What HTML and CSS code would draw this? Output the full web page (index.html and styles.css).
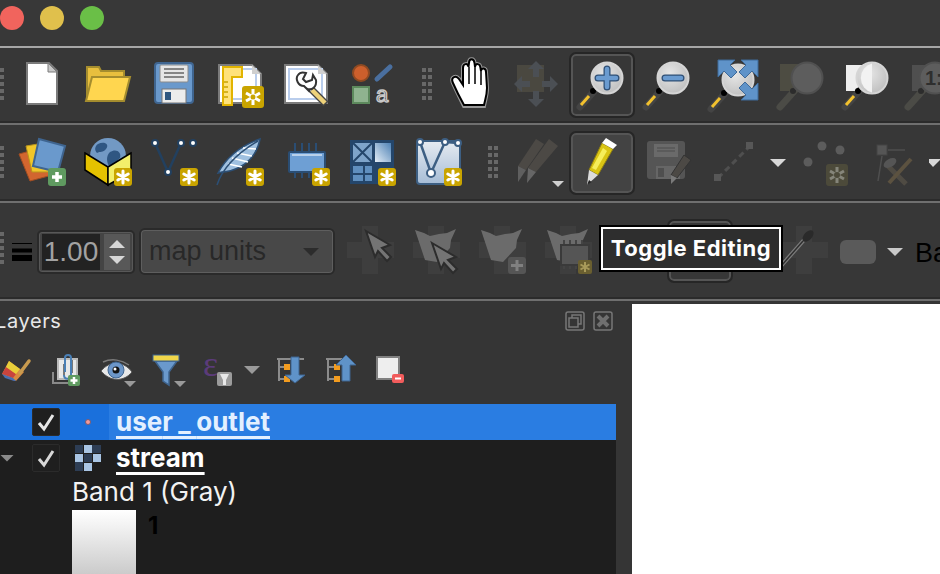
FILE: index.html
```html
<!DOCTYPE html>
<html lang="en">
<head>
<meta charset="utf-8">
<title>QGIS</title>
<link rel="stylesheet" href="styles.css">
</head>
<body>
<svg class="sprite" aria-hidden="true">
  <defs>
    <radialGradient id="lens" cx="0.4" cy="0.35" r="0.8"><stop offset="0" stop-color="#e6e6e6"/><stop offset="1" stop-color="#b9b9b9"/></radialGradient>
    <linearGradient id="nodebg" x1="0" y1="0" x2="0" y2="1"><stop offset="0" stop-color="#e6ebf1"/><stop offset="1" stop-color="#a6bdd6"/></linearGradient>
    <linearGradient id="tri" x1="0" y1="1" x2="1" y2="0"><stop offset="0" stop-color="#e3edf6"/><stop offset="1" stop-color="#4f82b5"/></linearGradient>
    <symbol id="badge" viewBox="0 0 18 18" overflow="visible">
      <rect width="18" height="18" rx="3" fill="#c9a400"/>
      <path d="M9 3v12M3.800 6l10.400 6M3.800 12l10.400-6" stroke="#fff" stroke-width="3" stroke-linecap="round"/>
    </symbol>
    <symbol id="mag" viewBox="0 0 60 60" overflow="visible">
      <path d="M26 28L9 47" stroke="#444" stroke-width="7" stroke-linecap="round"/>
      <path d="M18 36L10 45" stroke="#f2c12e" stroke-width="3"/>
      <circle cx="22" cy="31" r="3" fill="#000"/>
      <circle cx="36" cy="18" r="15.500" fill="url(#lens)" stroke="#d5d5d5" stroke-width="2"/>
    </symbol>
    <symbol id="magoff" viewBox="0 0 60 60" overflow="visible">
      <path d="M26 28L9 47" stroke="#4b4b46" stroke-width="7" stroke-linecap="round"/>
      <circle cx="22" cy="31" r="3" fill="#2c2c2c"/>
      <circle cx="36" cy="18" r="15.500" fill="#5d5d5d" stroke="#505050" stroke-width="2"/>
    </symbol>
    <symbol id="chk" viewBox="0 0 48 48" overflow="visible">
      <path d="M16 0h16v16h16v16H32v16H16V32H0V16h16z" fill="#3e3e3e"/>
    </symbol>
  </defs>
</svg>

<div class="window">
  <header class="titlebar">
    <span class="light red"></span>
    <span class="light yellow"></span>
    <span class="light green"></span>
  </header>

  <div class="toolbar row-one">
    <span class="grip edge"></span>
    <svg class="slot tall" viewBox="9 47 66 76"><path d="M27 63H49L57 71V104H27Z" fill="#fff" stroke="#7b7b7b" stroke-width="2"/><path d="M48 63V72H57Z" fill="#c8c8c8" stroke="#7b7b7b"/></svg>
    <svg class="slot tall" viewBox="75 47 66 76"><path d="M87 101V67H99L101 71H124V80H92Z" fill="#e8bf3e" stroke="#a58d2e" stroke-width="2"/><path d="M86 101L92 77H130L124 101Z" fill="#ffd64f" stroke="#a58d2e" stroke-width="2"/></svg>
    <svg class="slot tall" viewBox="141 47 66 76"><rect x="155" y="63" width="38" height="40" rx="3" fill="#6a99cc" stroke="#3f6590" stroke-width="2"/><rect x="160" y="65" width="28" height="17" rx="1" fill="#e6e6e6" stroke="#8a8a8a"/><path d="M164 69h20M164 73h20M164 77h20" stroke="#666" stroke-width="1.600"/><rect x="162" y="89" width="24" height="14" fill="#ececec" stroke="#777"/><rect x="165" y="92" width="6" height="8" fill="#2f5680"/></svg>
    <svg class="slot tall" viewBox="207 47 66 76"><path d="M219 65H252L261 74V103H219Z" fill="#fff" stroke="#7b7b7b" stroke-width="2"/><path d="M226 69H256V99H226Z" fill="none" stroke="#b9cdec" stroke-width="2"/><path d="M252 65V74H261Z" fill="#cfcfcf"/><path d="M223 67H242V77H232V105H223Z" fill="#ffe27a" stroke="#e2b400" stroke-width="2"/><path d="M224 82h4M224 87h4M224 92h4M224 97h4" stroke="#c9a400" stroke-width="1.500"/><rect x="242" y="86" width="22" height="22" rx="3" fill="#c9a400"/><path d="M253 89V105M246 93L260 101M246 101L260 93" stroke="#fff" stroke-width="3"/><circle cx="253" cy="97" r="2.500" fill="#c9a400"/></svg>
    <svg class="slot tall" viewBox="273 47 66 76"><path d="M285 65H318L327 74V103H285Z" fill="#fff" stroke="#7b7b7b" stroke-width="2"/><path d="M289 69H322V99H289Z" fill="none" stroke="#b9cdec" stroke-width="2"/><path d="M318 65V74H327Z" fill="#cfcfcf"/><path d="M312 90L326 104" stroke="#444" stroke-width="7"/><path d="M312 90L325 103" stroke="#eed27a" stroke-width="4.500"/><path d="M306 73L303 79L306 82L312 80L313 75L316 80C317 86 312 92 306 88L310 92L304 86C298 86 295 79 298 75C300 72 303 72 306 73Z" fill="#fff" stroke="#333" stroke-width="2"/></svg>
    <svg class="slot tall" viewBox="339 47 66 76"><circle cx="361" cy="73" r="8" fill="#cc5f2c" stroke="#8f4a22" stroke-width="2"/><path d="M377 79L390 67" stroke="#4a6f9f" stroke-width="5" stroke-linecap="round"/><rect x="353" y="87" width="16" height="16" fill="#8fb38f" stroke="#5d8a5d" stroke-width="2"/><text x="376" y="102" class="glyph-a">a</text></svg>
    <span class="grip mid"></span>
    <svg class="slot tall" viewBox="437 47 66 76"><path d="M464 106C460 98 456 90 452.500 82C451 77 456 75 459 79L463 85L463 68C463 63 468 63 468.500 67L469 63C469 58 474 58 474.500 63L475 67C475.500 63 480 63 480.500 68L481 71C481.500 67 486 68 486 72L487 88C487 95 485 100 484 106Z" fill="#fff" stroke="#999" stroke-width="4"/><path d="M464 105C460 98 456 90 452.500 82C451 77 456 75 459 79L463 85L463 68C463 63 468 63 468.500 67L469 63C469 58 474 58 474.500 63L475 67C475.500 63 480 63 480.500 68L481 71C481.500 67 486 68 486 72L487 88C487 95 485 100 484 105Z" fill="#fff" stroke="#000" stroke-width="2"/><path d="M469 67V84M475 67V84M481 71V85" stroke="#000" stroke-width="1.500"/></svg>
    <svg class="slot tall" viewBox="503 47 66 76"><rect x="517" y="65" width="27" height="27" fill="#4a4840"/><path d="M536 61l8 8h-5v8h-6v-8h-5zM536 107l-8-8h5v-8h6v8h5zM514 84l8-8v5h8v6h-8v5zM558 84l-8 8v-5h-8v-6h8v-5z" fill="#4b4f54"/></svg>
    <div class="active">
      <svg class="slot tall inner" viewBox="569 47 66 76"><use href="#mag" x="571" y="60" width="60" height="60"/><path d="M607 69V87M598 78H616" stroke="#2f4f75" stroke-width="7" stroke-linecap="round"/><path d="M607 69V87M598 78H616" stroke="#6a9bd0" stroke-width="4.500" stroke-linecap="round"/></svg>
    </div>
    <svg class="slot tall" viewBox="635 47 66 76"><use href="#mag" x="637" y="60" width="60" height="60"/><path d="M665 78H681" stroke="#2f4f75" stroke-width="7" stroke-linecap="round"/><path d="M665 78H681" stroke="#6a9bd0" stroke-width="4.500" stroke-linecap="round"/></svg>
    <svg class="slot tall" viewBox="701 47 66 76"><use href="#mag" x="702" y="62" width="60" height="60"/><path d="M718 60H735L730 65L737 72L731 78L724 71L718 77ZM758 60H741L746 65L739 72L745 78L752 71L758 77ZM758 100H741L746 95L739 88L745 82L752 89L758 83Z" fill="#5f93c9" stroke="#3f6a99"/></svg>
    <svg class="slot tall" viewBox="767 47 66 76"><rect x="780" y="64" width="24" height="27" fill="#4d4c42"/><use href="#magoff" x="771" y="60" width="60" height="60"/></svg>
    <svg class="slot tall" viewBox="833 47 66 76"><rect x="846" y="65" width="18" height="26" fill="#eee"/><use href="#mag" x="836" y="60" width="60" height="60"/><path d="M872 63.500A15 15 0 0 0 872 92.500Z" fill="#f2f2f2"/></svg>
    <svg class="slot tall" viewBox="899 47 66 76"><rect x="912" y="65" width="24" height="26" fill="#4f4f4f"/><use href="#magoff" x="899" y="60" width="60" height="60"/><text x="925" y="85" class="glyph-one">1:</text></svg>
  </div>

  <div class="toolbar row-two">
    <span class="grip edge"></span>
    <svg class="slot tall" viewBox="9 125 66 76"><path d="M19 154L48 146L56 174L30 181Z" fill="#d2662f" stroke="#a14d22"/><path d="M26 146L50 142L54 172L32 172Z" fill="#f0c62a" stroke="#b9951c"/><path d="M39 139L65 146L58 172L33 166Z" fill="#6a99cc" stroke="#3f6590" stroke-width="2"/><rect x="48" y="168" width="18" height="18" rx="3" fill="#5f9a60"/><path d="M57 172V182M52 177H62" stroke="#fff" stroke-width="3.500"/></svg>
    <svg class="slot tall" viewBox="75 125 66 76"><circle cx="108" cy="156" r="18" fill="#7299c4"/><path d="M98 144C104 141 110 144 106 149C103 153 100 151 97 153C94 150 95 146 98 144ZM110 152C116 148 122 152 120 158C116 162 112 164 110 168C106 162 106 156 110 152Z" fill="#2f5682"/><path d="M85 153L108 167V185L85 170Z" fill="#e5c200" stroke="#000" stroke-width="1.500"/><path d="M131 153L108 167V185L131 172Z" fill="#f3ef6b" stroke="#000" stroke-width="1.500"/><use href="#badge" x="114" y="168" width="18" height="18"/></svg>
    <svg class="slot tall" viewBox="141 125 66 76"><path d="M155 143L168 172L181 143" fill="none" stroke="#22405f" stroke-width="2.500"/><g fill="#fff" stroke="#22405f" stroke-width="2"><circle cx="155" cy="143" r="3"/><circle cx="181" cy="143" r="3"/><circle cx="193" cy="143" r="3"/><circle cx="168" cy="172" r="3"/></g><use href="#badge" x="180" y="168" width="18" height="18"/></svg>
    <svg class="slot tall" viewBox="207 125 66 76"><path d="M218 173C226 158 240 146 260 139C258 150 252 160 240 167C232 171 226 172 222 172Z" fill="#9fc0e0" stroke="#2c4f75" stroke-width="1.500"/><path d="M232 158L248 162M237 153L252 156M243 148L256 149M228 164L242 167" stroke="#fff" stroke-width="1.500"/><path d="M217 185C222 170 236 154 258 141" fill="none" stroke="#2c4f75" stroke-width="1.500"/><use href="#badge" x="246" y="168" width="18" height="18"/></svg>
    <svg class="slot tall" viewBox="273 125 66 76"><path d="M295 143V151M302 143V151M309 143V151M316 143V151M295 172V178M302 172V178M309 172V178M316 172V178" stroke="#2a4d73" stroke-width="2"/><rect x="289" y="152" width="36" height="20" rx="1" fill="#6e9fd4" stroke="#2a4d73" stroke-width="2"/><path d="M292 155H322" stroke="#b8d0ea" stroke-width="2"/><use href="#badge" x="312" y="168" width="18" height="18"/></svg>
    <svg class="slot tall" viewBox="339 125 66 76"><rect x="350" y="140" width="44" height="44" fill="#24466b"/><rect x="353" y="143" width="19" height="19" fill="#7ea4ca"/><path d="M353 143L372 162M372 143L353 162" stroke="#24466b" stroke-width="2"/><path d="M375 143H391V162H375Z" fill="url(#tri)"/><path d="M353 166H363V173H353ZM365 166H372V173H365ZM353 175H363V181H353ZM365 175H372V181H365Z" fill="#5f8fbf"/><use href="#badge" x="378" y="168" width="18" height="18"/></svg>
    <svg class="slot tall" viewBox="405 125 66 76"><rect x="417" y="141" width="43" height="43" rx="3" fill="url(#nodebg)" stroke="#3d5f83" stroke-width="2"/><path d="M420 142L431 173L445 142L458 143" fill="none" stroke="#3d5f83" stroke-width="2.500"/><g fill="#fff" stroke="#3d5f83" stroke-width="2"><circle cx="431" cy="173" r="4"/><circle cx="445" cy="142" r="3"/><circle cx="458" cy="143" r="3"/><circle cx="420" cy="142" r="3"/></g><use href="#badge" x="444" y="168" width="18" height="18"/></svg>
    <span class="grip mid low"></span>
    <svg class="slot tall" viewBox="503 125 66 76"><g fill="#4c4945"><path d="M536 139L544 144L526 170L518 166Z"/><path d="M518 166L526 170L518 182Z" fill="#5f5f5f"/><path d="M549 139L558 146L536 172L528 168Z"/><path d="M528 168L536 172L527 183Z" fill="#666"/></g><path d="M552 181H564L558 187Z" fill="#cfcfcf"/></svg>
    <div class="active pressed">
      <svg class="slot tall inner" viewBox="569 125 66 76"><path d="M602 143L613 149L598 175L589 170Z" fill="#d9c414" stroke="#8f7f12"/><path d="M603 148L607 151L596 170L592 168Z" fill="#f6ee5a"/><path d="M606 138L617 145L613 149L602 143Z" fill="#fff"/><path d="M589 170L598 175L587 185Z" fill="#dcdcdc"/><path d="M587 185L589 180L591.500 182Z" fill="#222"/></svg>
    </div>
    <svg class="slot tall" viewBox="635 125 66 76"><rect x="647" y="141" width="38" height="38" rx="3" fill="#555"/><rect x="654" y="144" width="24" height="13" fill="#6a6a6a"/><path d="M657 148h18M657 151h18" stroke="#4c4c4c"/><rect x="656" y="166" width="24" height="13" fill="#666"/><rect x="658" y="168" width="6" height="9" fill="#4f4f4f"/><path d="M684 155L691 160L677 178L671 175Z" fill="#4c4945" stroke="#333"/><path d="M671 175L677 178L671 184Z" fill="#7a7a7a"/></svg>
    <svg class="slot tall" viewBox="701 125 66 76"><path d="M718 178L750 146" stroke="#4f4f4f" stroke-width="3" stroke-dasharray="6 4"/><rect x="714" y="174" width="7" height="7" fill="#575757"/><rect x="746" y="142" width="7" height="7" fill="#575757"/></svg>
    <svg class="arrow-slot" viewBox="767 125 22 76"><path d="M770 159H786L778 167Z" fill="#d8d8d8"/></svg>
    <svg class="slot tall gap-l" viewBox="793 125 66 76"><g fill="#5c5c5c"><circle cx="808" cy="162" r="4.500"/><circle cx="822" cy="146" r="4.500"/><circle cx="840" cy="150" r="4.500"/></g><rect x="826" y="164" width="22" height="22" rx="3" fill="#4c4a3a"/><path d="M837 167V183M830 171L844 179M830 179L844 171" stroke="#85857a" stroke-width="3"/><circle cx="837" cy="175" r="3" fill="#4c4a3a"/></svg>
    <svg class="slot tall gap-l" viewBox="863 125 66 76"><rect x="877" y="145" width="10" height="10" fill="#555" stroke="#444"/><path d="M878 181L882 156M888 150H905" stroke="#4f4f4f" stroke-width="1.500"/><path d="M888 166L906 184" stroke="#4f4b43" stroke-width="5"/><path d="M911 159L889 183" stroke="#5c5240" stroke-width="4"/><ellipse cx="890" cy="163" rx="7" ry="4" transform="rotate(-30 890 163)" fill="#555"/></svg>
    <svg class="arrow-slot" viewBox="929 125 22 76"><path d="M926 159H941L933 167Z" fill="#d8d8d8"/></svg>
  </div>

  <div class="toolbar row-three">
    <span class="grip edge short"></span>
    <svg class="lines" viewBox="12 205 20 94"><path d="M12 243.500H32" stroke="#000"/><path d="M12 250.500H32" stroke="#000" stroke-width="4"/><path d="M12 258H32" stroke="#000" stroke-width="6"/></svg>
    <div class="spin">
      <span class="spin-value">1.00</span>
      <span class="stepper">
        <svg class="step" viewBox="0 0 16 8"><path d="M0 8L8 0L16 8Z" fill="#d6d6d6"/></svg>
        <svg class="step" viewBox="0 0 16 8"><path d="M0 0L8 8L16 0Z" fill="#d6d6d6"/></svg>
      </span>
    </div>
    <div class="combo">
      <span>map units</span>
      <svg class="combo-arrow" viewBox="0 0 16 8"><path d="M0 0H16L8 8Z" fill="#2c2c2c"/></svg>
    </div>
    <svg class="slot tall-three first-tool" viewBox="347 205 66 94"><use href="#chk" x="346" y="226" width="48" height="48"/><path d="M366 231L390 245L382 248L391 257L387 261L378 251L375 257Z" fill="#747474" stroke="#2c2c2c" stroke-width="2"/></svg>
    <svg class="slot tall-three" viewBox="413 205 66 94"><use href="#chk" x="412" y="226" width="48" height="48"/><path d="M415 230L424 233L430 236L439 234L447 233L456 229L451 240L450 248L437 262L425 260L420 245Z" fill="#6b6b6b"/><path d="M432 243L456 257L448 260L457 269L453 273L444 263L441 269Z" fill="#747474" stroke="#2c2c2c" stroke-width="2"/></svg>
    <svg class="slot tall-three" viewBox="479 205 66 94"><use href="#chk" x="478" y="226" width="48" height="48"/><path d="M481 230L490 233L496 236L505 234L513 233L522 229L517 240L516 248L503 262L491 260L486 245Z" fill="#6b6b6b"/><rect x="508" y="257" width="18" height="17" rx="3" fill="#555"/><path d="M517 260V271M511 265.500H523" stroke="#808080" stroke-width="3"/></svg>
    <svg class="slot tall-three" viewBox="545 205 66 94"><use href="#chk" x="544" y="226" width="48" height="48"/><path d="M547 230L556 233L562 236L571 234L579 233L588 229L583 240L582 248L569 262L557 260L552 245Z" fill="#6b6b6b"/><path d="M564 240V245M570 240V245M576 240V245M582 240V245M564 265V269M570 265V269M576 265V269" stroke="#444" stroke-width="2"/><rect x="561" y="245" width="28" height="20" fill="#555" stroke="#3a3a3a" stroke-width="2"/><rect x="578" y="260" width="14" height="14" rx="2" fill="#6a5f30"/><path d="M585 262V272M580.500 264.500L589.500 269.500M580.500 269.500L589.500 264.500" stroke="#a89a5a" stroke-width="2"/></svg>
    <span class="spacer-hidden"></span>
    <div class="hidden-btn"></div>
    <svg class="slot tall-three brush" viewBox="772 205 66 94"><use href="#chk" x="782" y="226" width="48" height="48"/><path d="M783 266L806 240" stroke="#7d7d7d" stroke-width="4"/><path d="M784 265L805 241" stroke="#2e2e2e" stroke-width="1.500"/><ellipse cx="810" cy="236" rx="7" ry="4" transform="rotate(-48 810 236)" fill="#2a2a2a"/></svg>
    <span class="swatch"></span>
    <svg class="swatch-arrow" viewBox="0 0 16 8"><path d="M0 0H16L8 8Z" fill="#c9c9c9"/></svg>
    <span class="band-label">Ba</span>
  </div>

  <div class="tooltip">Toggle Editing</div>

  <main class="workspace">
    <section class="dock">
      <div class="dock-head">
        <span class="dock-title">Layers</span>
        <span class="dock-btns">
          <svg class="dock-btn" viewBox="0 0 20 20"><rect x="1" y="1" width="18" height="18" rx="2" fill="none" stroke="#777" stroke-width="1.500"/><path d="M4 7H13V16H4ZM7 7V4H16V13H13" fill="none" stroke="#777" stroke-width="1.500"/></svg>
          <svg class="dock-btn" viewBox="0 0 20 20"><rect x="1" y="1" width="18" height="18" rx="2" fill="none" stroke="#777" stroke-width="1.500"/><path d="M5 5L15 15M15 5L5 15" stroke="#6f6f6f" stroke-width="4"/></svg>
        </span>
      </div>
      <div class="dock-tools">
        <svg class="dock-svg" viewBox="0 340 410 64">
          <path d="M2 374L9 361L24 372L16 381Z" fill="#d98a3f"/><path d="M2 374L6 367L16 374L13 378Z" fill="#c9443d"/><path d="M6 367L9 361L20 369L16 374Z" fill="#e8cf3a"/><path d="M2 374L5 378L14 381L16 381L13 378Z" fill="#4a6fb0"/><path d="M20 373L29 361" stroke="#c99b4f" stroke-width="3.500" stroke-linecap="round"/>
          <path d="M53 372V383H70" fill="none" stroke="#8a8a8a" stroke-width="2"/><rect x="58" y="359" width="19" height="20" fill="#e8e8e8" stroke="#bbb" stroke-width="2"/><path d="M64 364V375M72 360V373" stroke="#777" stroke-width="2"/><path d="M64 375C64 380 71 380 71 375V358C71 354 65 354 65 358V372" fill="none" stroke="#4a7fb5" stroke-width="2"/><rect x="68" y="375" width="12" height="11" rx="2" fill="#5f9a60"/><path d="M74 377V384M70.500 380.500H77.500" stroke="#fff" stroke-width="2.500"/>
          <path d="M103 362C112 358 122 360 129 365" fill="none" stroke="#7a7a7a" stroke-width="1.500"/><path d="M101 371C110 360 124 361 132 372C124 382 110 382 101 371Z" fill="#e8e8e8" stroke="#555"/><circle cx="116" cy="370" r="8" fill="#6d97c9" stroke="#3f6590"/><circle cx="116" cy="370" r="3.500" fill="#111"/><circle cx="115" cy="369" r="1.500" fill="#fff"/><path d="M124 381H136L130 387Z" fill="#9a9a9a"/>
          <path d="M155 361H177L169 372V385L163 381V372Z" fill="#6a99cc" stroke="#3f6590" stroke-width="1.500"/><rect x="153" y="355" width="26" height="6" fill="#f0d64a" stroke="#3f6590"/><path d="M174 381H186L180 387Z" fill="#9a9a9a"/>
          <text x="203" y="376" class="glyph-eps">ε</text><rect x="217" y="372" width="15" height="14" rx="2" fill="#9c9c9c"/><path d="M220 374H229L226 380V385H223V380Z" fill="#e8e8e8"/><path d="M244 366H260L252 374Z" fill="#9a9a9a"/>
          <path d="M277 359H304M279 359V381M279 367H287M279 379H287" stroke="#8c8c8c" stroke-width="2" fill="none"/><rect x="284" y="364" width="6" height="6" fill="#f39c1f"/><rect x="284" y="376" width="6" height="6" fill="#f39c1f"/><path d="M291 357H299V375H305L295 383L285 375H291Z" fill="#5f93c9" stroke="#3f6590"/>
          <path d="M326 359H343M328 359V381M328 367H336M328 379H336" stroke="#8c8c8c" stroke-width="2" fill="none"/><rect x="334" y="364" width="6" height="6" fill="#f39c1f"/><rect x="334" y="376" width="6" height="6" fill="#f39c1f"/><path d="M342 381V365H336L346 355L356 365H350V381Z" fill="#5f93c9" stroke="#3f6590"/>
          <rect x="377" y="357" width="22" height="22" fill="#eee" stroke="#808080" stroke-width="2"/><rect x="392" y="374" width="12" height="9" rx="2" fill="#f25c5c"/><path d="M395 378.500H401" stroke="#fff" stroke-width="2"/>
        </svg>
      </div>
      <div class="tree">
        <div class="layer selected">
          <span class="twisty"></span>
          <span class="check"><svg class="tick" viewBox="0 0 20 20"><path d="M3 11L8 17L17 3" fill="none" stroke="#e6e6e6" stroke-width="3"/></svg></span>
          <svg class="layer-icon" viewBox="0 0 26 26"><circle cx="13" cy="13" r="2.500" fill="#f29a9a" stroke="#7a5a70"/></svg>
          <span class="layer-name">use<span class="score">r_</span>outlet</span>
        </div>
        <div class="layer">
          <span class="twisty open"></span>
          <span class="check"><svg class="tick" viewBox="0 0 20 20"><path d="M3 11L8 17L17 3" fill="none" stroke="#d8d8d8" stroke-width="3"/></svg></span>
          <svg class="layer-icon" viewBox="0 0 26 26"><path d="M0 0H8V8H0ZM17 0H26V8H17ZM9 9H17V17H9ZM0 17H8V26H0ZM17 17H17V26H17Z" fill="#2d3d54"/><path d="M9 0H17V8H9ZM0 9H8V17H0ZM18 9H26V17H18ZM9 18H17V26H9Z" fill="#a9c5e4"/></svg>
          <span class="layer-name">stream</span>
        </div>
        <div class="band">Band 1 (Gray)</div>
        <div class="legend">
          <span class="ramp"></span>
          <span class="ramp-label">1</span>
        </div>
      </div>
    </section>
    <div class="canvas"></div>
  </main>
</div>
</body>
</html>
```

FILE: styles.css
```css
* { box-sizing: content-box; }
html, body { margin: 0; padding: 0; background: #383838; }
.sprite { display: block; width: 0; height: 0; overflow: hidden; }

.window {
  position: relative;
  width: 940px;
  height: 574px;
  overflow: hidden;
  background: #383838;
  font-family: Inter, "Liberation Sans", sans-serif;
}

.titlebar {
  display: flex;
  gap: 16px;
  height: 36px;
  padding-top: 6px;
  padding-bottom: 4px;
  border-bottom: 2px solid #a6a6a6;
}
.light { width: 24px; height: 24px; border-radius: 50%; }
.red { background: #f1645d; }
.yellow { background: #e0c04c; }
.green { background: #6abf47; }

.toolbar {
  display: flex;
  align-items: flex-start;
  background: #373737;
  box-shadow: inset 0 -2px 0 #2b2b2b;
  overflow: visible;
}
.row-one { height: 75px; border-bottom: 2px solid #6f6f6f; }
.row-two { height: 76px; border-bottom: 2px solid #6f6f6f; }
.row-three { height: 94px; padding-top: 2px; border-bottom: 2px solid #6f6f6f; }

.slot { flex: none; width: 66px; display: block; }
.tall { height: 76px; }
.row-one > .slot { margin-top: -1px; }
.tall-three { height: 94px; }
.gap-l { margin-left: 4px; }
.arrow-slot { flex: none; width: 22px; height: 76px; }

.grip {
  flex: none;
  width: 10px;
  height: 34px;
  background: conic-gradient(at 4px 4px, transparent 75%, #686868 0) 0 0 / 6px 7px;
}
.row-one .grip { margin-top: 20px; }
.row-two .grip { margin-top: 21px; }
.grip.edge { margin-left: -6px; margin-right: 5px; }
.grip.mid { margin-left: 17px; margin-right: 5px; }
.grip.short { margin-top: 27px; margin-right: 8px; height: 35px; }

.active {
  flex: none;
  width: 58px;
  height: 58px;
  margin: 6px 2px 0;
  border: 2px solid #555;
  border-radius: 5px;
  outline: 2px solid #262626;
  outline-offset: 0;
  box-sizing: content-box;
}
.row-two .active { margin-top: 8px; height: 56px; background: #434343; }
.active .inner { margin: -9px 0 0 -4px; }
.row-two .active .inner { margin-top: -10px; }
.row-one > .active { margin-top: 6px; }

.lines { flex: none; width: 20px; height: 94px; margin-right: 5px; }

.spin {
  flex: none;
  display: flex;
  align-items: center;
  gap: 4px;
  box-sizing: border-box;
  width: 98px;
  height: 44px;
  margin-top: 25px;
  padding: 3px;
  background: #444;
  border: 2px solid #2a2a2a;
  border-radius: 5px;
  box-shadow: inset 0 0 0 1px #585858;
}
.spin-value {
  box-sizing: border-box;
  width: 60px;
  height: 36px;
  background: #222;
  color: #a2a2a2;
  font-size: 28px;
  line-height: 36px;
  text-align: center;
  font-family: "Liberation Sans", sans-serif;
}
.stepper {
  display: flex;
  flex-direction: column;
  align-items: center;
  justify-content: center;
  gap: 8px;
  width: 27px;
  height: 36px;
  background: #585858;
}
.step { display: block; width: 16px; height: 8px; }

.combo {
  flex: none;
  display: flex;
  align-items: center;
  justify-content: space-between;
  box-sizing: border-box;
  width: 194px;
  height: 45px;
  margin: 24px 0 0 5px;
  padding: 0 13px 0 7px;
  background: #484848;
  border: 2px solid #5e5e5e;
  outline: 2px solid #2a2a2a;
  outline-offset: -1px;
  border-radius: 5px;
  color: #282828;
  font-size: 27px;
  font-family: "Liberation Sans", sans-serif;
}
.combo-arrow { width: 16px; height: 8px; }

.first-tool { margin-left: 13px; }
.spacer-hidden { flex: none; width: 58px; }
.hidden-btn {
  flex: none;
  width: 58px;
  height: 56px;
  margin-top: 16px;
  border: 2px solid #555;
  outline: 2px solid #262626;
  outline-offset: 0;
  border-radius: 5px;
}
.brush { margin-left: 39px; }
.swatch {
  flex: none;
  width: 36px;
  height: 24px;
  margin: 35px 0 0 4px;
  background: #5a5a5a;
  border-radius: 6px;
}
.swatch-arrow { flex: none; width: 16px; height: 8px; margin: 43px 0 0 11px; }
.band-label {
  flex: none;
  margin: 30px 0 0 12px;
  color: #000;
  font-size: 27px;
  line-height: 36px;
  font-family: "Liberation Sans", sans-serif;
}

.tooltip {
  position: absolute;
  left: 601px;
  top: 227px;
  box-sizing: border-box;
  width: 180px;
  height: 43px;
  background: #2e2e2e;
  border: 2px solid #fff;
  outline: 2px solid #000;
  outline-offset: 0;
  color: #fff;
  font-size: 22px;
  font-weight: 700;
  letter-spacing: 0.5px;
  line-height: 38px;
  text-align: center;
}

.workspace { display: flex; height: 273px; background: #353535; }
.dock { flex: none; width: 616px; display: flex; flex-direction: column; }
.dock-head {
  flex: none;
  display: flex;
  justify-content: space-between;
  align-items: center;
  height: 39px;
  padding-right: 3px;
  overflow: hidden;
}
.dock-title {
  margin-left: -5px;
  color: #e8e8e8;
  font-size: 20px;
  letter-spacing: 0.6px;
}
.dock-btns { display: flex; gap: 8px; }
.dock-btn { display: block; width: 20px; height: 20px; }
.dock-tools { flex: none; height: 64px; }
.dock-svg { display: block; width: 410px; height: 64px; }

.tree { flex: 1; background: #1e1e1e; overflow: hidden; }
.layer { display: flex; align-items: center; height: 36px; }
.selected { background: #1a70dc; }
.twisty { flex: none; width: 14px; height: 7px; margin-right: 18px; }
.twisty.open { background: #8a8a8a; clip-path: polygon(0 0, 100% 0, 50% 100%); }
.check {
  flex: none;
  display: flex;
  align-items: center;
  justify-content: center;
  box-sizing: border-box;
  width: 28px;
  height: 28px;
  background: #1f1f1f;
  border: 1px solid #2b2b2b;
  border-radius: 2px;
}
.tick { display: block; width: 20px; height: 20px; }
.layer-icon { flex: none; width: 26px; height: 26px; margin: 0 8px 0 15px; }
.layer-name {
  flex: 1;
  align-self: stretch;
  padding-left: 7px;
  color: #fff;
  font-size: 26px;
  font-weight: 700;
  line-height: 36px;
  text-decoration: underline;
  text-decoration-thickness: 3px;
  text-decoration-skip-ink: none;
  text-underline-offset: 5px;
}
.score { letter-spacing: 5.5px; }
.selected .layer-name { background: #2a7de2; color: #e3f0ff; }
.band {
  height: 34px;
  padding-left: 72px;
  color: #f2f2f2;
  font-size: 26px;
  line-height: 32px;
}
.legend { display: flex; align-items: flex-start; padding-left: 72px; }
.ramp {
  flex: none;
  width: 64px;
  height: 64px;
  background: linear-gradient(#fff, #cbcbcb);
}
.ramp-label {
  margin-left: 12px;
  color: #000;
  font-size: 24px;
  font-weight: 700;
  line-height: 32px;
}

.canvas { flex: 1; margin: 3px 0 0 16px; background: #fff; }

.glyph-a { font: 22px "Liberation Sans", sans-serif; fill: #333; stroke: #c8c8c8; stroke-width: 1.4px; }
.glyph-one { font: bold 20px "Liberation Sans", sans-serif; fill: #2e2e2e; }
.glyph-eps { font: 36px "Liberation Serif", serif; fill: #5b3b7a; }
```
